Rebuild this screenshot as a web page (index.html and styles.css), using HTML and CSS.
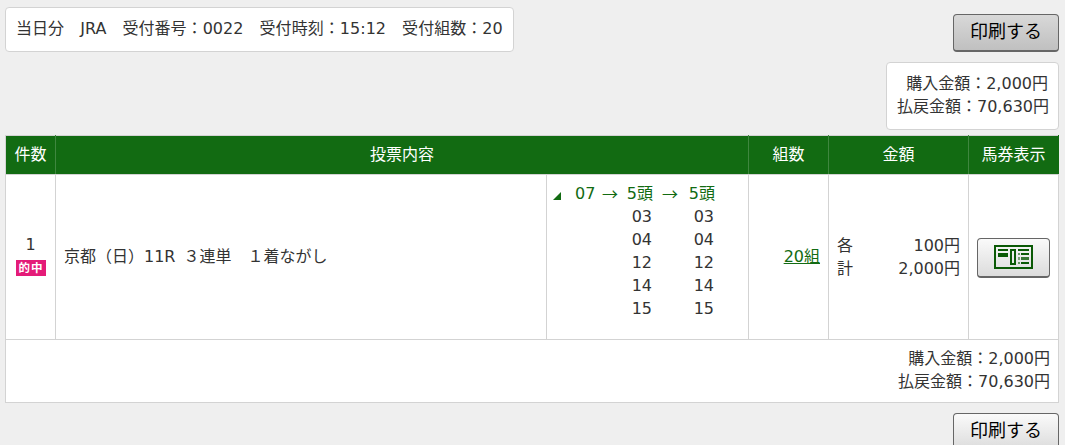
FILE: index.html
```
<!DOCTYPE html>
<html lang="ja">
<head>
    <meta charset="UTF-8">
    <meta name="viewport" content="width=device-width, initial-scale=1.0">
    <title>投票内容</title>
    <link rel="stylesheet" href="styles.css">
</head>
<body>
    <div class="top">
        <p class="info">当日分　JRA　受付番号：0022　受付時刻：15:12　受付組数：20</p>
        <div class="side">
            <button type="button" class="btn btn-active">印刷する</button>
            <div class="summary">
                <p>購入金額：2,000円</p>
                <p>払戻金額：70,630円</p>
            </div>
        </div>
    </div>

    <table class="bets">
        <colgroup>
            <col class="col-no">
            <col class="col-content">
            <col class="col-horses">
            <col class="col-count">
            <col class="col-amount">
            <col class="col-ticket">
        </colgroup>
        <thead>
            <tr>
                <th>件数</th>
                <th colspan="2">投票内容</th>
                <th>組数</th>
                <th>金額</th>
                <th>馬券表示</th>
            </tr>
        </thead>
        <tbody>
            <tr class="bet">
                <td class="no">1<span class="hit">的中</span></td>
                <td class="content">京都（日）11R<span class="type">３連単　１着ながし</span></td>
                <td class="horses">
                    <div class="picks">
                        <span class="toggle"></span>
                        <span class="head first">07</span>
                        <span class="head arrow">→</span>
                        <span class="head">5頭</span>
                        <span class="head arrow">→</span>
                        <span class="head">5頭</span>
                        <div class="nums second">03<br>04<br>12<br>14<br>15</div>
                        <div class="nums third">03<br>04<br>12<br>14<br>15</div>
                    </div>
                </td>
                <td class="count"><a href="#">20組</a></td>
                <td class="amount">
                    <div class="line"><span>各</span><span>100円</span></div>
                    <div class="line"><span>計</span><span>2,000円</span></div>
                </td>
                <td class="ticket">
                    <button type="button" class="btn btn-ticket" aria-label="馬券表示">
                        <svg width="39" height="24" viewBox="0 0 39 24">
                            <rect x="1" y="1" width="37" height="22" fill="none" stroke="#0b5a06" stroke-width="2"/>
                            <g fill="#0b5a06">
                                <rect x="4" y="4" width="10" height="2"/>
                                <rect x="4" y="8" width="10" height="4"/>
                                <rect x="24" y="4" width="11" height="2"/>
                                <rect x="27" y="8" width="8" height="2"/>
                                <rect x="27" y="12" width="8" height="3" opacity=".8"/>
                                <rect x="27" y="17" width="8" height="2"/>
                                <rect x="24" y="8" width="2" height="2" opacity=".6"/>
                                <rect x="24" y="12" width="2" height="3" opacity=".5"/>
                                <rect x="24" y="17" width="2" height="2" opacity=".6"/>
                            </g>
                            <rect x="17" y="5" width="4" height="14" fill="none" stroke="#0b5a06" stroke-width="2"/>
                        </svg>
                    </button>
                </td>
            </tr>
            <tr class="total">
                <td colspan="6">
                    <p>購入金額：2,000円</p>
                    <p>払戻金額：70,630円</p>
                </td>
            </tr>
        </tbody>
    </table>

    <div class="bottom">
        <button type="button" class="btn">印刷する</button>
    </div>
</body>
</html>
```
FILE: styles.css
```
* {
    box-sizing: border-box;
}
body {
    margin: 0;
    padding: 7px 6px 0 5px;
    height: 445px;
    overflow: hidden;
    background-color: #efefef;
    color: #333;
    font-family: "DejaVu Sans", "Noto Sans CJK JP", sans-serif;
    font-size: 16px;
    line-height: 23px;
}
p {
    margin: 0;
}
.top {
    display: flex;
    justify-content: space-between;
    align-items: flex-start;
    height: 128px;
}
.info {
    width: 509px;
    height: 45px;
    padding: 9px 10px;
    background: #fff;
    border: 1px solid #d3d3d3;
    border-radius: 4px;
    letter-spacing: 0.04px;
    white-space: nowrap;
}
.side {
    display: flex;
    flex-direction: column;
    align-items: flex-end;
    gap: 10px;
    padding-top: 7px;
}
.summary {
    width: 173px;
    height: 68px;
    padding: 9px 10px;
    background: #fff;
    border: 1px solid #d3d3d3;
    border-radius: 4px;
    text-align: right;
    white-space: nowrap;
}
.btn {
    display: block;
    width: 106px;
    height: 38px;
    padding: 0 0 3px;
    border: 1px solid #666;
    border-bottom-width: 2px;
    border-radius: 4px;
    background: linear-gradient(#fafafa, #dcdcdc);
    color: #000;
    font-family: inherit;
    font-size: 18px;
    line-height: 23px;
    cursor: pointer;
}
.btn-active {
    background: linear-gradient(#d8d8d8, #c0c0c0);
}

/* 投票一覧 */
.bets {
    width: 1054px;
    table-layout: fixed;
    border-collapse: collapse;
    background: #fff;
}
.col-no { width: 50px; }
.col-content { width: 491px; }
.col-horses { width: 202px; }
.col-count { width: 80px; }
.col-amount { width: 140px; }
.col-ticket { width: 90px; }
.bets th,
.bets td {
    padding: 0 0 2px;
    border: 1px solid #d3d3d3;
}
.bets th {
    height: 39px;
    background: #126b12;
    border-left-color: #3f873f;
    border-right-color: #3f873f;
    color: #fff;
    font-weight: normal;
}
.bets th:first-child {
    border-left-color: #d3d3d3;
}
.bets th:last-child {
    border-right-color: #126b12;
}
.bet {
    height: 165px;
}
.no {
    text-align: center;
}
.bets .no {
    padding-bottom: 5px;
}
.hit {
    display: block;
    width: 30px;
    height: 16px;
    margin: 4px auto 0;
    background: #e41b78;
    color: #fff;
    font-size: 11.5px;
    font-weight: bold;
    letter-spacing: 1px;
    line-height: 17px;
    text-indent: 1px;
    overflow: hidden;
}
.bets .content {
    padding-left: 8px;
}
.type {
    margin-left: 8px;
}
.bets .horses {
    padding: 7px 0 0 6px;
    vertical-align: top;
}
.picks {
    display: grid;
    grid-template-columns: 22px 24px 22px 32px 34px 28px;
    text-align: right;
}
.toggle {
    width: 8px;
    height: 8px;
    margin-top: 10px;
    background: #126b12;
    clip-path: polygon(100% 0, 100% 100%, 0 100%);
}
.head {
    color: #126b12;
}
.first {
    text-align: left;
}
.arrow {
    font-family: "Noto Sans CJK JP", sans-serif;
    text-align: center;
}
.nums {
    padding-right: 1px;
}
.second {
    grid-column: 4;
}
.third {
    grid-column: 6;
}
.bets .count {
    padding-right: 8px;
    text-align: right;
}
.count a {
    color: #126b12;
}
.bets .amount {
    padding: 0 8px 1px;
}
.line {
    display: flex;
    justify-content: space-between;
}
.bets .ticket {
    padding: 2px 0 0;
}
.btn-ticket {
    display: flex;
    align-items: center;
    justify-content: center;
    width: 73px;
    height: 40px;
    margin: 0 auto;
    padding: 0 0 1px;
}
.bets .total td {
    height: 63px;
    padding: 0 8px 2px 0;
    text-align: right;
}
.bottom {
    display: flex;
    justify-content: flex-end;
    padding-top: 10px;
}
```
